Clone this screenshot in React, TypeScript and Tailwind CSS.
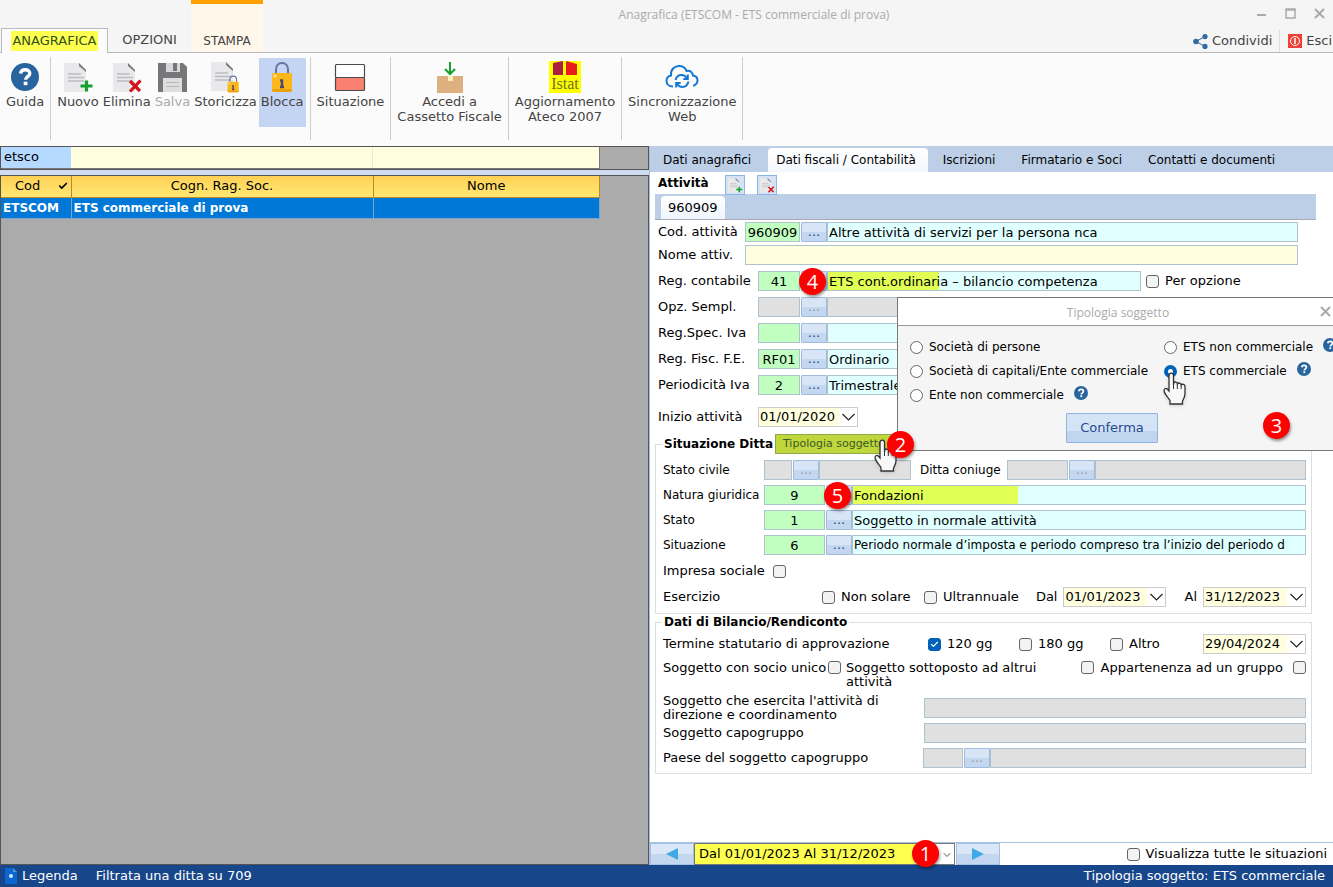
import React, { useState } from 'react';
import { Check, ChevronDown } from 'lucide-react';

const FIELD = 'h-5 min-w-0 border border-[#afc3cf] text-black outline-none';

function HelpIcon({ className = 'size-[14px]' }: { className?: string }) {
  return (
    <svg viewBox="0 0 28 28" className={className} aria-hidden="true">
      <circle cx="14" cy="14" r="14" fill="#28659f" />
      <path d="M9.5 10.5c.4-2.6 2.200-3.800 4.700-3.800 2.700 0 4.600 1.500 4.600 3.800 0 3.200-4.200 3.200-4.200 6.300" fill="none" stroke="#fff" strokeWidth="3.400" />
      <rect x="12.700" y="18.700" width="3.700" height="3.500" fill="#fff" />
    </svg>
  );
}

function DocShape() {
  return (
    <g>
      <path d="M2 2h15l7 7v22H2z" fill="#e9e9ec" />
      <path d="M17 2l7 7v2l-7-6z" fill="#77787c" />
      <path d="M6 13h13M6 16.500h16M6 20h16" stroke="#bcbdc2" strokeWidth="1.300" />
    </g>
  );
}

function NewDocIcon({ className = 'size-8' }: { className?: string }) {
  return (
    <svg viewBox="0 0 32 32" className={className} aria-hidden="true">
      <DocShape />
      <path d="M24.500 19.500v11M18.500 25h12" stroke="#14a02c" strokeWidth="3.200" />
    </svg>
  );
}

function DeleteDocIcon({ className = 'size-8' }: { className?: string }) {
  return (
    <svg viewBox="0 0 32 32" className={className} aria-hidden="true">
      <DocShape />
      <path d="M19 20l10 10M29.500 19.500L19 30.500" stroke="#d3131c" strokeWidth="3.200" />
    </svg>
  );
}

function SaveIcon() {
  return (
    <svg viewBox="0 0 32 32" className="size-8" aria-hidden="true">
      <path d="M2 2h25l4 4v25H2z" fill="#77777a" />
      <path d="M10 2h14v9H10z" fill="#d8d8db" />
      <path d="M17 2h4v8h-4z" fill="#77777a" />
      <path d="M7 17h19v14H7z" fill="#dededf" />
      <path d="M10 21.500h13M10 25.500h13" stroke="#b7b7ba" />
    </svg>
  );
}

function LockShape() {
  return (
    <g>
      <path d="M5 14V8.500C5 4.500 7.600 2 11 2s6 2.500 6 6.500V14" fill="none" stroke="#6b6fa5" strokeWidth="2" />
      <rect x="1" y="12" width="20" height="19" rx="2" fill="#fdb71a" />
      <path d="M1 28h20v1a2 2 0 0 1-2 2H3a2 2 0 0 1-2-2z" fill="#eda010" />
      <circle cx="4" cy="15" r="1.500" fill="#ffe9a6" />
      <path d="M11 18.500v7M9 19.500h3M9 26h4" stroke="#4b4b63" strokeWidth="2.500" />
    </g>
  );
}

function ArchiveIcon() {
  return (
    <svg viewBox="0 0 32 34" className="h-[34px] w-8" aria-hidden="true">
      <DocShape />
      <g transform="translate(18 15) scale(.56)">
        <LockShape />
      </g>
    </svg>
  );
}

function LockIcon() {
  return (
    <svg viewBox="0 0 22 32" className="h-8 w-[22px]" aria-hidden="true">
      <LockShape />
    </svg>
  );
}

function SituationIcon() {
  return (
    <svg viewBox="0 0 32 32" className="size-8" aria-hidden="true">
      <rect x="1.500" y="3.500" width="29" height="13" rx="1" fill="#fff" stroke="#4a4a4a" strokeWidth="1.200" />
      <rect x="1.500" y="16.500" width="29" height="13" rx="1" fill="#fa8072" stroke="#4a4a4a" strokeWidth="1.200" />
    </svg>
  );
}

function BoxIcon() {
  return (
    <svg viewBox="0 0 32 32" className="size-8" aria-hidden="true">
      <rect x="3" y="15" width="26" height="17" fill="#deb080" />
      <path d="M14 15h5v5h-5z" fill="#fff0b5" />
      <path d="M16 1v11M11 8l5 5 5-5" fill="none" stroke="#14a02c" strokeWidth="2" />
    </svg>
  );
}

function IstatIcon() {
  return (
    <svg viewBox="0 0 32 32" className="size-8" aria-hidden="true">
      <path d="M0 0h32v32H0z" fill="#ffff00" />
      <path d="M4 2l10-2v14H4z" fill="#ad1f3c" />
      <path d="M17 0l11 3v11H17z" fill="#e91c1c" />
      <text x="16" y="28" textAnchor="middle" fontFamily="Liberation Serif, serif" fontSize="16" fill="#74702b">Istat</text>
    </svg>
  );
}

function CloudIcon() {
  return (
    <svg viewBox="0 0 34 26" className="h-[26px] w-[34px]" fill="none" stroke="#1477d4" strokeWidth="2" aria-hidden="true">
      <path d="M8 22.500C4 22.500 1.500 20 1.500 17c0-3 2-5 4.500-5.500C5.500 5 10 2 14 2c4 0 6.500 2 7.500 5 4-.8 6.500 2 6.500 4.500 3 .4 4.500 2.500 4.500 5s-2 5-4.500 5.300" />
      <path d="M10.500 16c1-3.500 3.500-5 6-5 2.500 0 4.500 1.500 5.500 3.500M23.500 17.500c-1 4-3.500 5.500-6 5.500s-4.500-1.500-5.500-3.500" />
      <path d="M22.800 10.500v4.500h-4.500M11.200 23.500V19h4.500" />
    </svg>
  );
}

function HandCursor({ className }: { className: string }) {
  return (
    <svg viewBox="0 0 24 33" className={`pointer-events-none absolute h-[33px] w-6 drop-shadow ${className}`} aria-hidden="true">
      <path
        d="M6 3.500C6 .3 10.500.3 10.500 3.500V13l.3-2c.8-1.600 3.500-1.200 3.700.8.800-1.300 3.400-1 3.700 1 1-1 3.800-.5 3.800 1.700v7c0 4-1.500 5.500-2.500 7.500V32H7v-3.500C5.500 26 2 22.500 1.200 19.500c-.5-2.800 1.600-3.800 3-2.500L6 19z"
        fill="#f8f8f8"
        stroke="#333"
        strokeWidth="1.300"
      />
      <path d="M10.500 12v5M14.300 12v5M18.200 13v4" stroke="#333" />
    </svg>
  );
}

function Badge({ value, className }: { value: number; className: string }) {
  return (
    <span className={`pointer-events-none absolute z-20 flex size-[27px] items-center justify-center rounded-full bg-[#fe0000] font-['Open_Sans',sans-serif] text-[20px] leading-5 text-white shadow-[1px_2px_3px_rgba(0,0,0,0.4)] ${className}`}>
      {value}
    </span>
  );
}

interface TickProps {
  id: string;
  checked?: boolean;
}

function Tick({ id, checked }: TickProps) {
  return (
    <span className="relative size-[13px] shrink-0">
      <input
        id={id}
        type="checkbox"
        defaultChecked={checked}
        className="peer block size-[13px] appearance-none rounded-[3px] border border-[#666] bg-[#f3f3f3] checked:border-[#0061b8] checked:bg-[#0061b8]"
      />
      <Check className="pointer-events-none absolute top-[2px] left-[2px] hidden size-[9px] text-white peer-checked:block" strokeWidth={3} />
    </span>
  );
}

interface LookupProps {
  id: string;
  label: string;
  code?: string;
  text?: string;
  disabled?: boolean;
  labelClass?: string;
  codeWidth?: string;
  textClass?: string;
  badge?: number;
}

function Lookup({ id, label, code = '', text = '', disabled, labelClass = 'w-[100px]', codeWidth = 'w-[42px]', textClass = 'bg-[#e0ffff]', badge }: LookupProps) {
  return (
    <div className="flex h-5 min-w-0 flex-1 items-center">
      <label htmlFor={id} className={`shrink-0 leading-[14px] whitespace-nowrap ${labelClass}`}>{label}</label>
      <input
        id={id}
        defaultValue={code}
        disabled={disabled}
        className={`${FIELD} shrink-0 text-center ${codeWidth} ${disabled ? 'bg-[#e0e0e0]' : 'bg-[#c0ffc0]'}`}
      />
      <span className="relative ml-px flex shrink-0">
        <button
          type="button"
          disabled={disabled}
          aria-label={`Cerca ${label}`}
          className="h-5 w-[26px] rounded-[1px] border border-[#9ebbdc] bg-linear-to-b from-[#d8e5f7] from-50% to-[#c3d7f0] to-50% leading-4 text-[#224a86] disabled:text-[#999]"
        >
          {badge ? '' : '...'}
        </button>
        {badge && <Badge value={badge} className="top-[-3px] left-[-2px]" />}
      </span>
      <input
        aria-label={`${label} descrizione`}
        defaultValue={text}
        disabled={disabled}
        className={`${FIELD} flex-1 px-px ${disabled ? 'bg-[#e0e0e0]' : textClass}`}
      />
    </div>
  );
}

function DateField({ id, value, label, width = 'w-[103px]' }: { id: string; value: string; label?: string; width?: string }) {
  return (
    <span className={`flex h-5 shrink-0 border border-[#ccc] bg-white ${width}`}>
      <input id={id} aria-label={label} defaultValue={value} className="min-w-0 flex-1 bg-[#ffffe0] pl-px text-black outline-none" />
      <button type="button" aria-label="Apri calendario" className="flex w-[18px] items-center justify-center">
        <svg viewBox="0 0 13 8" className="h-2 w-[13px]" fill="none" stroke="#222" strokeWidth="1.200" aria-hidden="true">
          <path d="M.5 1l6 6 6-6" />
        </svg>
      </button>
    </span>
  );
}

const ribbon = [
  [{ label: 'Guida', icon: <HelpIcon className="size-7" /> }],
  [
    { label: 'Nuovo', icon: <NewDocIcon /> },
    { label: 'Elimina', icon: <DeleteDocIcon /> },
    { label: 'Salva', icon: <SaveIcon />, muted: true },
    { label: 'Storicizza', icon: <ArchiveIcon /> },
    { label: 'Blocca', icon: <LockIcon />, active: true },
  ],
  [{ label: 'Situazione', icon: <SituationIcon /> }],
  [{ label: 'Accedi a\nCassetto Fiscale', icon: <BoxIcon /> }],
  [{ label: 'Aggiornamento\nAteco 2007', icon: <IstatIcon /> }],
  [{ label: 'Sincronizzazione\nWeb', icon: <CloudIcon /> }],
] as { label: string; icon: React.ReactNode; muted?: boolean; active?: boolean }[][];

function Header() {
  return (
    <header className="flex h-[53px] border-b border-[#bbb] bg-[#f5f5f5] text-[#444]">
      <nav className="flex shrink-0 items-end">
        <button type="button" className="-mb-px ml-px flex h-[25px] w-[107px] items-center justify-center border border-b-0 border-[#bbb] bg-[#fbfbfb]">
          <span className="bg-[#ffff50] px-px leading-5 text-[#2d5016]">ANAGRAFICA</span>
        </button>
        <button type="button" className="h-6 w-[83px]">OPZIONI</button>
        <button type="button" className="flex h-[52px] w-[72px] items-end justify-center border-t-4 border-[#ffa000] bg-[#fff7ea] pb-[3px] text-[12px]">STAMPA</button>
      </nav>
      <h1 className="flex-1 pt-[7px] pl-[52px] text-center font-['Open_Sans',sans-serif] text-[12px] leading-4 text-[#aaa]">
        Anagrafica (ETSCOM - ETS commerciale di prova)
      </h1>
      <div className="flex shrink-0 flex-col justify-between">
        <div className="flex justify-end gap-[18px] pt-2 pr-2 text-[#aaa]">
          <button type="button" aria-label="Riduci">
            <svg viewBox="0 0 11 11" className="size-[11px]"><path d="M1 7h9" stroke="currentColor" strokeWidth="2" /></svg>
          </button>
          <button type="button" aria-label="Ingrandisci">
            <svg viewBox="0 0 11 11" className="size-[11px]"><path d="M1 1h9v9H1zM1 2h9" fill="none" stroke="currentColor" strokeWidth="1.500" /></svg>
          </button>
          <button type="button" aria-label="Chiudi">
            <svg viewBox="0 0 11 11" className="size-[11px]"><path d="M1 1l9 9M10 1l-9 9" stroke="currentColor" strokeWidth="2" /></svg>
          </button>
        </div>
        <div className="flex h-[22px] items-center pr-px">
          <button type="button" className="flex items-center gap-1 pr-[7px]">
            <svg viewBox="0 0 15 15" className="size-[15px]" fill="#2f6ba5" aria-hidden="true">
              <path d="M12 2.500L3 7.500l9 5" fill="none" stroke="#2f6ba5" />
              <circle cx="3" cy="7.500" r="2.800" />
              <circle cx="12" cy="2.600" r="2.600" />
              <circle cx="12" cy="12.400" r="2.600" />
            </svg>
            Condividi
          </button>
          <button type="button" className="flex h-[22px] items-center gap-1 border-l border-[#ddd] pl-2">
            <svg viewBox="0 0 14 14" className="size-[14px]" fill="none" stroke="#fff" aria-hidden="true">
              <path d="M0 0h14v14H0z" fill="#ef4035" stroke="none" />
              <circle cx="7" cy="7" r="4.500" />
              <path d="M7 4v6" strokeWidth="1.500" />
            </svg>
            Esci
          </button>
        </div>
      </div>
    </header>
  );
}

function Ribbon() {
  return (
    <div className="flex h-[93px] bg-[#fbfbfb] pt-1 pb-[6px] text-[#444]">
      {ribbon.map((group, i) => (
        <div key={i} className="flex items-start border-r border-[#ccc] px-1 pt-px">
          {group.map((item) => (
            <button
              key={item.label}
              type="button"
              className={`flex h-[69px] flex-col items-center px-[2px] pt-[3px] leading-[15px] whitespace-pre ${item.active ? 'bg-[#c3d5f2]' : ''} ${item.muted ? 'text-[#aaa]' : ''}`}
            >
              <span className="mb-px flex h-8 items-center justify-center">{item.icon}</span>
              {item.label}
            </button>
          ))}
        </div>
      ))}
    </div>
  );
}

function CompanyList() {
  return (
    <section className="flex min-w-0 flex-col bg-[#cfdcef]">
      <div className="h-6 border border-[#555] bg-[#ababab]">
        <div className="mr-12 flex h-[22px] border-r border-b border-[#777]">
          <input aria-label="Filtro codice" defaultValue="etsco" className="w-[70px] shrink-0 bg-[#b5d9ff] px-[3px] pb-[2px] outline-none" />
          <input aria-label="Filtro ragione sociale" className="w-[302px] min-w-0 border-r border-[#e8e8d8] bg-[#ffffe0] outline-none" />
          <input aria-label="Filtro nome" className="min-w-0 flex-1 bg-[#ffffe0] outline-none" />
        </div>
      </div>
      <div className="mt-[5px] flex-1 border border-[#555] bg-[#ababab]">
        <div className="mr-12">
          <table className="w-full table-fixed border-collapse">
            <colgroup>
              <col className="w-[70px]" />
              <col className="w-[302px]" />
              <col />
            </colgroup>
            <thead>
              <tr className="h-[21px] bg-linear-to-b from-[#ffd055] to-[#ffe873]">
                <th className="border-r border-b border-[#b98a2c] p-0 font-normal">
                  <span className="flex items-center justify-between pr-[3px] pl-[14px]">
                    Cod
                    <Check className="size-[10px]" strokeWidth={4} />
                  </span>
                </th>
                <th className="border-r border-b border-[#b98a2c] p-0 font-normal">Cogn. Rag. Soc.</th>
                <th className="border-r border-b border-[#b98a2c] p-0 font-normal">Nome</th>
              </tr>
            </thead>
            <tbody>
              <tr className="h-[21px] bg-[#0078d7] text-left font-bold text-white">
                <td className="border-r border-b border-[#7aa7cf] py-0 pl-[2px] text-[12px]">ETSCOM</td>
                <td className="border-r border-b border-[#7aa7cf] py-0 pl-[2px] text-[12px]">ETS commerciale di prova</td>
                <td className="border-r border-b border-[#7aa7cf]" />
              </tr>
            </tbody>
          </table>
        </div>
      </div>
    </section>
  );
}

function SubjectDialog() {
  const [kind, setKind] = useState('ets-comm');

  const option = (value: string, label: string, help?: boolean) => (
    <div className="flex h-6 items-center">
      <label className="flex items-center gap-[6px] whitespace-nowrap">
        <input
          type="radio"
          name="tipologia"
          checked={kind === value}
          onChange={() => setKind(value)}
          className="size-[13px] appearance-none rounded-full border border-[#666] bg-white checked:border-4 checked:border-[#0061b8]"
        />
        {label}
      </label>
      {help && (
        <button type="button" aria-label="Aiuto" className="mb-1 ml-[10px]">
          <HelpIcon />
        </button>
      )}
    </div>
  );

  return (
    <div role="dialog" aria-label="Tipologia soggetto" className="absolute top-[151px] right-[-6px] z-10 w-[442px] border border-[#777] bg-[#f5f5f5]">
      <div className="relative border-b border-[#999] bg-white pt-[7px] pb-[5px] text-center font-['Open_Sans',sans-serif] text-[12px] leading-[15px] text-[#aaa]">
        Tipologia soggetto
        <button type="button" aria-label="Chiudi" className="absolute top-2 right-[7px]">
          <svg viewBox="0 0 11 11" className="size-[11px]"><path d="M1 1l9 9M10 1l-9 9" stroke="currentColor" strokeWidth="2" /></svg>
        </button>
      </div>
      <div className="relative grid grid-cols-[254px_1fr] pt-[9px] pl-3 text-[12px]">
        <div>
          {option('persone', 'Società di persone')}
          {option('capitali', 'Società di capitali/Ente commerciale')}
          {option('non-comm', 'Ente non commerciale', true)}
        </div>
        <div>
          {option('ets-non', 'ETS non commerciale', true)}
          {option('ets-comm', 'ETS commerciale', true)}
        </div>
        <HandCursor className="top-[46px] left-[265px]" />
      </div>
      <div className="relative flex pt-[6px] pb-[7px] pl-[168px]">
        <button type="button" className="h-[30px] w-[92px] rounded-[1px] border border-[#8fb4e0] bg-linear-to-b from-[#d5e3f6] from-60% to-[#c0d5f0] to-60% text-[#1d4b8f]">
          Conferma
        </button>
        <Badge value={3} className="top-[5px] right-12" />
      </div>
    </div>
  );
}

const TABS = ['Dati anagrafici', 'Dati fiscali / Contabilità', 'Iscrizioni', 'Firmatario e Soci', 'Contatti e documenti'];

function ActivityForm() {
  return (
    <div className="pr-[17px] pl-[5px]">
      <div className="flex h-[22px] items-center pl-[3px]">
        <b className="w-[67px] text-[12px]">Attività</b>
        <button type="button" aria-label="Aggiungi attività" className="mt-1 mr-3 flex size-5 items-center justify-center border border-[#8fb4e0] bg-[#d3e2f5]">
          <NewDocIcon className="size-4" />
        </button>
        <button type="button" aria-label="Elimina attività" className="mt-1 flex size-5 items-center justify-center border border-[#8fb4e0] bg-[#d3e2f5]">
          <DeleteDocIcon className="size-4" />
        </button>
      </div>
      <div className="flex h-[26px] items-end border-b border-[#aab] bg-[#bccfe7] pl-[6px]">
        <button type="button" className="h-[23px] rounded-t bg-linear-to-b from-white to-[#eff5fd] px-[7px]">960909</button>
      </div>
      <div className="flex flex-col gap-[6px] pt-[2px] pr-[18px] pl-[3px]">
        <div className="flex flex-col gap-[3px]">
          <Lookup id="cod" label="Cod. attività" code="960909" text="Altre attività di servizi per la persona nca" labelClass="w-[87px]" codeWidth="w-[55px]" />
          <div className="flex h-5 items-center">
            <label htmlFor="nome" className="w-[87px] shrink-0">Nome attiv.</label>
            <input id="nome" className={`${FIELD} flex-1 bg-[#ffffe0]`} />
          </div>
        </div>
        <div className="flex items-center">
          <Lookup
            id="reg"
            label="Reg. contabile"
            code="41"
            text="ETS cont.ordinaria – bilancio competenza"
            textClass="bg-[linear-gradient(to_right,#e1ff55_111px,#e0ffff_111px)]"
            badge={4}
          />
          <label htmlFor="opz" className="flex w-[157px] shrink-0 items-center gap-[6px] pl-[5px]">
            <Tick id="opz" />
            Per opzione
          </label>
        </div>
        <div className="mr-[157px] flex flex-col gap-[6px]">
          <Lookup id="sempl" label="Opz. Sempl." disabled />
          <Lookup id="spec" label="Reg.Spec. Iva" />
          <Lookup id="fisc" label="Reg. Fisc. F.E." code="RF01" text="Ordinario" />
          <Lookup id="period" label="Periodicità Iva" code="2" text="Trimestrale" />
        </div>
        <div className="mt-[6px] flex h-5 items-center">
          <label htmlFor="inizio" className="w-[100px]">Inizio attività</label>
          <DateField id="inizio" value="01/01/2020" width="w-[100px]" />
        </div>
      </div>
    </div>
  );
}

function CompanyStatus() {
  return (
    <fieldset className="mt-[7px] mr-[21px] ml-[5px] min-w-0 border border-[#ddd] pr-[5px] pb-[6px] pl-[7px]">
      <legend className="-ml-px flex h-5 items-center gap-[2px] px-[2px]">
        <b className="text-[12px]">Situazione Ditta</b>
        <span className="relative flex">
          <button type="button" className="h-5 w-[122px] border border-[#8aa94a] bg-[#bfd63c] pl-[7px] text-left text-[11px] text-[#3c5a24]">
            Tipologia soggetto
          </button>
          <HandCursor className="top-[5px] left-[99px] z-10" />
          <Badge value={2} className="top-[-3px] left-[112px]" />
        </span>
      </legend>
      <div className="flex flex-col gap-[5px] pt-[6px]">
        <div className="flex gap-[9px]">
          <div className="flex w-[248px] shrink-0">
            <Lookup id="civile" label="Stato civile" labelClass="w-[101px] text-[12px]" codeWidth="w-7" disabled />
          </div>
          <Lookup id="coniuge" label="Ditta coniuge" labelClass="w-[87px] text-[12px]" codeWidth="w-[61px]" disabled />
        </div>
        <Lookup
          id="natura"
          label="Natura giuridica"
          code="9"
          text="Fondazioni"
          labelClass="w-[101px] text-[12px]"
          codeWidth="w-[61px]"
          textClass="bg-[linear-gradient(to_right,#e1ff55_165px,#e0ffff_165px)]"
          badge={5}
        />
        <Lookup id="stato" label="Stato" code="1" text="Soggetto in normale attività" labelClass="w-[101px] text-[12px]" codeWidth="w-[61px]" />
        <Lookup
          id="situazione"
          label="Situazione"
          code="6"
          text="Periodo normale d’imposta e periodo compreso tra l’inizio del periodo d"
          labelClass="w-[101px] text-[12px]"
          codeWidth="w-[61px]"
          textClass="bg-[#e0ffff] text-[12px]"
        />
      </div>
      <div className="mt-[6px] flex h-5 items-center gap-2">
        <label htmlFor="impresa">Impresa sociale</label>
        <Tick id="impresa" />
      </div>
      <div className="mt-[6px] flex h-5 items-center">
        <span className="w-[159px] shrink-0">Esercizio</span>
        <label htmlFor="solare" className="flex w-[102px] shrink-0 items-center gap-[6px] whitespace-nowrap">
          <Tick id="solare" />
          Non solare
        </label>
        <label htmlFor="ultra" className="flex items-center gap-[6px]">
          <Tick id="ultra" />
          Ultrannuale
        </label>
        <span className="ml-auto flex items-center gap-[6px]">
          <label htmlFor="dal">Dal</label>
          <DateField id="dal" value="01/01/2023" />
          <label htmlFor="al" className="ml-3">Al</label>
          <DateField id="al" value="31/12/2023" />
        </span>
      </div>
    </fieldset>
  );
}

function BalanceData() {
  return (
    <fieldset className="mr-[21px] ml-[5px] min-w-0 border border-[#ddd] pr-[5px] pb-[5px] pl-[7px]">
      <legend className="-ml-px flex h-4 items-center px-[2px]">
        <b className="text-[12px]">Dati di Bilancio/Rendiconto</b>
      </legend>
      <div className="mt-1 flex h-5 items-center">
        <span className="w-[265px] shrink-0">Termine statutario di approvazione</span>
        <label htmlFor="gg120" className="flex w-[91px] items-center gap-[6px]">
          <Tick id="gg120" checked />
          120 gg
        </label>
        <label htmlFor="gg180" className="flex w-[91px] items-center gap-[6px]">
          <Tick id="gg180" />
          180 gg
        </label>
        <label htmlFor="altro" className="flex items-center gap-[6px]">
          <Tick id="altro" />
          Altro
        </label>
        <span className="ml-auto">
          <DateField id="termine" value="29/04/2024" label="Termine di approvazione" />
        </span>
      </div>
      <div className="mt-[7px] flex h-7 items-start leading-[14px]">
        <label htmlFor="unico" className="w-[165px] shrink-0 whitespace-nowrap">Soggetto con socio unico</label>
        <Tick id="unico" />
        <label htmlFor="sottoposto" className="mr-10 ml-[5px] w-[195px] shrink-0">Soggetto sottoposto ad altrui attività</label>
        <Tick id="sottoposto" />
        <label htmlFor="gruppo" className="ml-auto pr-[10px] whitespace-nowrap">Appartenenza ad un gruppo</label>
        <Tick id="gruppo" />
      </div>
      <div className="mt-[9px] flex flex-col gap-[5px]">
        <div className="flex h-5 items-center">
          <label htmlFor="direzione" className="w-[261px] shrink-0 pr-8 leading-[14px]">Soggetto che esercita l'attività di direzione e coordinamento</label>
          <input id="direzione" disabled className={`${FIELD} flex-1 bg-[#e0e0e0]`} />
        </div>
        <div className="flex h-5 items-center">
          <label htmlFor="capogruppo" className="w-[261px] shrink-0">Soggetto capogruppo</label>
          <input id="capogruppo" disabled className={`${FIELD} flex-1 bg-[#e0e0e0]`} />
        </div>
        <Lookup id="paese" label="Paese del soggetto capogruppo" labelClass="w-[260px]" codeWidth="w-10" disabled />
      </div>
    </fieldset>
  );
}

function PeriodBar() {
  const arrow = 'flex w-11 items-center justify-center border border-[#a3bfe2] bg-linear-to-b from-[#dae7f8] from-50% to-[#c3d7f1] to-50%';

  return (
    <div className="mt-auto flex h-[23px] items-stretch border-t border-[#a8c0de]">
      <button type="button" aria-label="Periodo precedente" className={arrow}>
        <svg viewBox="0 0 12 12" className="size-3" fill="#3fa9e8"><path d="M12 0v12L0 6z" /></svg>
      </button>
      <span className="relative flex w-[261px]">
        <select aria-label="Periodo" className="w-full appearance-none border border-[#777] bg-[linear-gradient(to_right,#ffff50_220px,#fff_220px)] px-1 outline-none">
          <option>Dal 01/01/2023 Al 31/12/2023</option>
        </select>
        <ChevronDown className="pointer-events-none absolute top-[6px] right-[2px] size-3 text-[#555]" strokeWidth={2} />
        <Badge value={1} className="top-[-3px] left-[218px]" />
      </span>
      <button type="button" aria-label="Periodo successivo" className={`${arrow} ml-px`}>
        <svg viewBox="0 0 12 12" className="size-3" fill="#3fa9e8"><path d="M0 0v12l12-6z" /></svg>
      </button>
      <label htmlFor="tutte" className="ml-auto flex items-center gap-[6px] pr-[6px]">
        <Tick id="tutte" />
        Visualizza tutte le situazioni
      </label>
    </div>
  );
}

function App() {
  return (
    <div className="flex min-h-screen flex-col overflow-hidden bg-white font-['DejaVu_Sans',Verdana,sans-serif] text-[13px] leading-4 text-black">
      <Header />
      <Ribbon />
      <main className="grid flex-1 grid-cols-[649fr_684fr]">
        <CompanyList />
        <section className="relative flex min-w-0 flex-col border-l border-[#a9bfdd]">
          <div className="flex h-[26px] items-end bg-[#bccfe7] text-[12px]">
            {TABS.map((tab, i) => (
              <button
                key={tab}
                type="button"
                className={`h-6 whitespace-nowrap ${i === 1 ? 'mr-[2px] ml-1 rounded-t bg-linear-to-b from-white to-[#f4f8fd] pr-3 pl-2' : 'px-[13px]'}`}
              >
                {tab}
              </button>
            ))}
          </div>
          <ActivityForm />
          <CompanyStatus />
          <BalanceData />
          <PeriodBar />
          <SubjectDialog />
        </section>
      </main>
      <footer className="flex h-[22px] items-center bg-[#17468a] pr-2 pl-1 text-white">
        <button type="button" className="flex items-center gap-1">
          <svg viewBox="0 0 14 16" className="h-4 w-[14px]" aria-hidden="true">
            <path d="M1 0h8l4 4v12H1z" fill="#0b66cf" />
            <path d="M9 0l4 4H9z" fill="#4b97e5" />
            <circle cx="7" cy="8" r="2" fill="#cfe6ff" />
          </svg>
          Legenda
        </button>
        <span className="ml-[18px]">Filtrata una ditta su 709</span>
        <span className="ml-auto">Tipologia soggetto: ETS commerciale</span>
      </footer>
    </div>
  );
}

export default App;
